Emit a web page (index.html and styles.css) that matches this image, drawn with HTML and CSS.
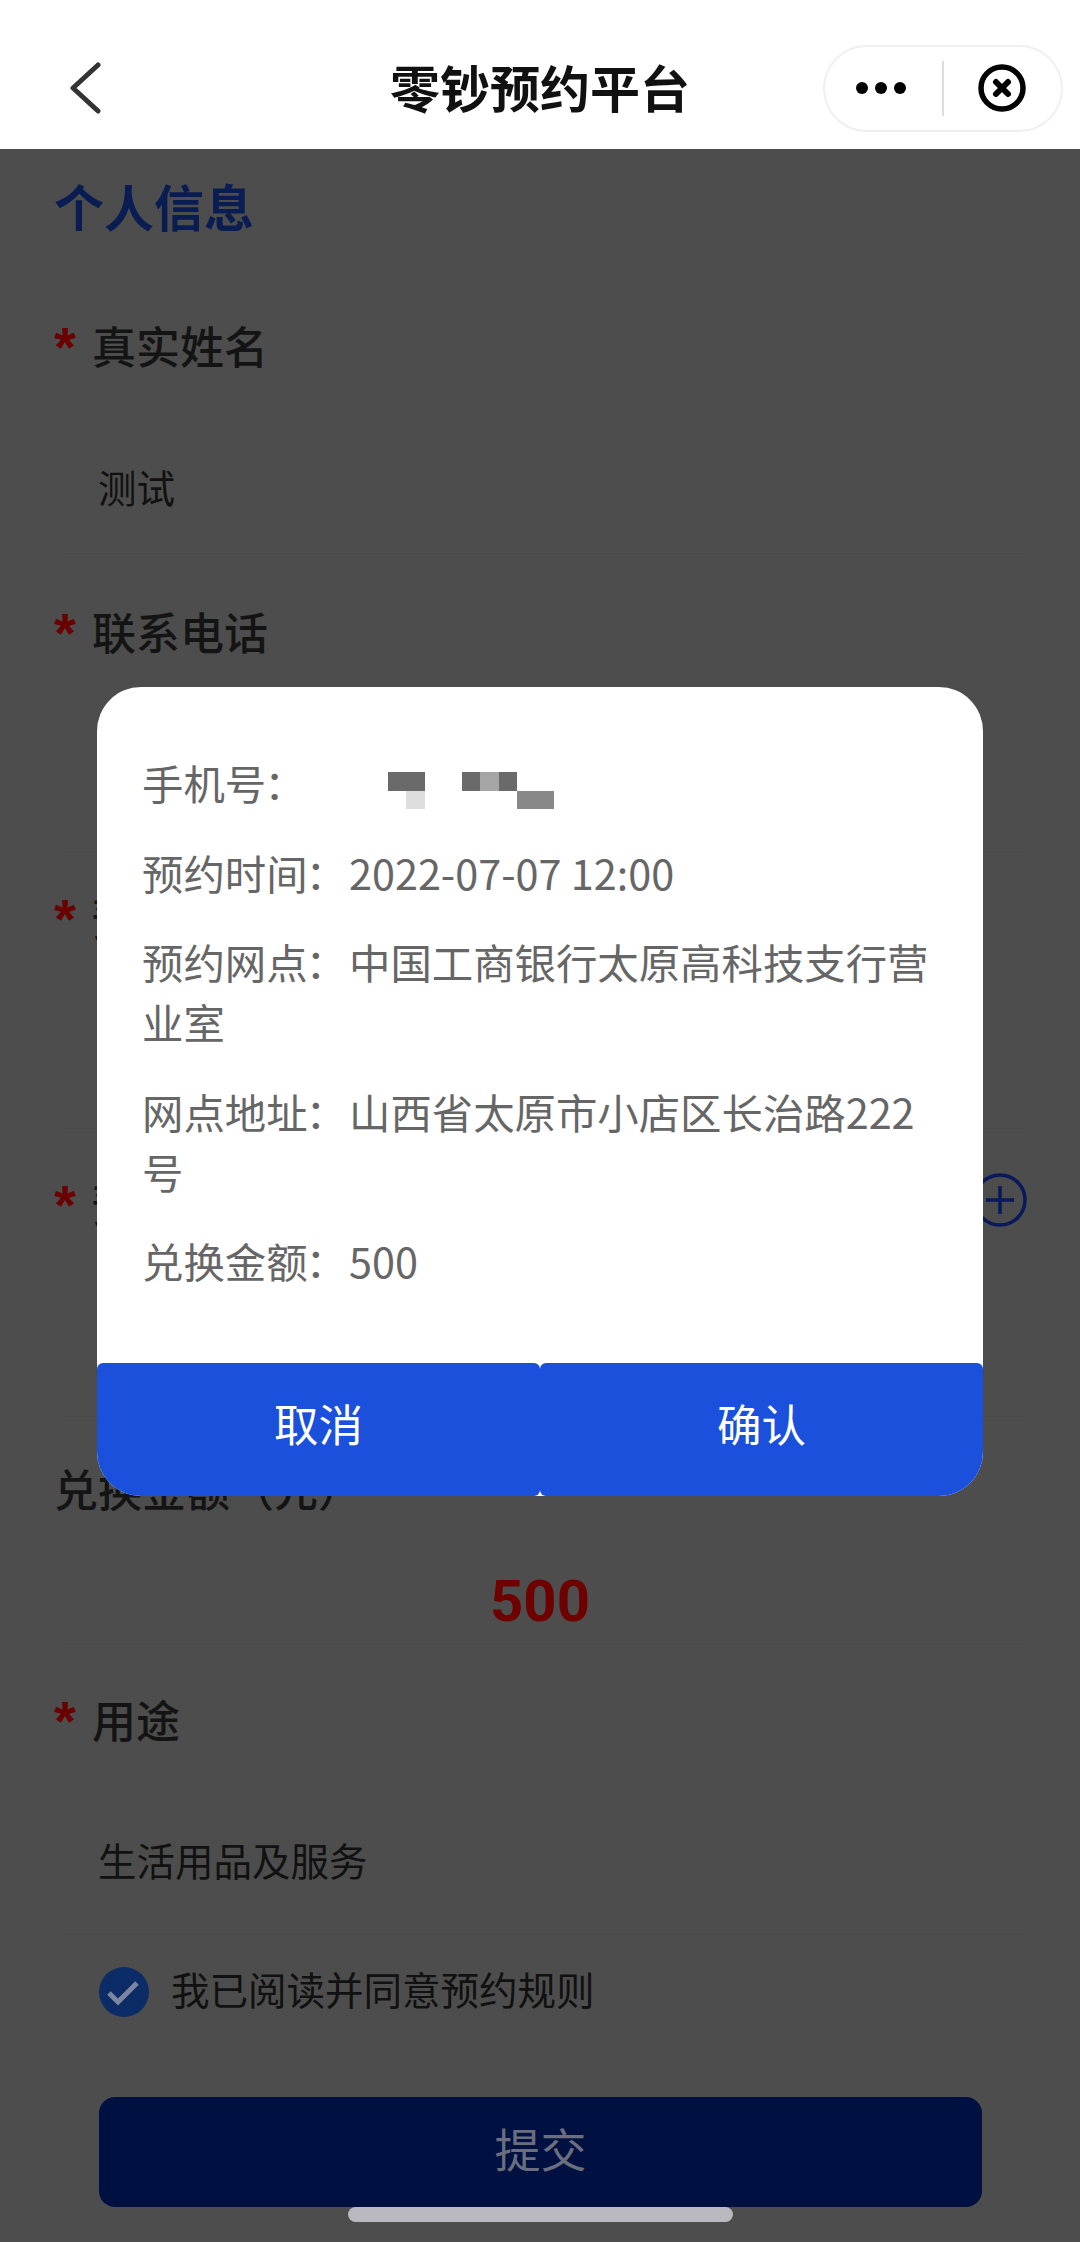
FILE: index.html
```html
<!DOCTYPE html>
<html lang="zh-CN">
<head>
<meta charset="utf-8">
<title>零钞预约平台</title>
<link rel="stylesheet" href="styles.css">
</head>
<body>
<div class="screen">
  <header class="nav">
    <svg class="back" viewBox="0 0 32 52" aria-hidden="true"><path d="M29 3 L4 26 L29 49"/></svg>
    <h1 class="nav-title">零钞预约平台</h1>
    <div class="capsule">
      <svg class="more" viewBox="0 0 52 14" aria-hidden="true"><circle cx="7" cy="7" r="6"/><circle cx="26" cy="7" r="6"/><circle cx="45" cy="7" r="6"/></svg>
      <span class="capsule-rule"></span>
      <svg class="close" viewBox="0 0 48 48" aria-hidden="true"><circle cx="24" cy="24" r="21"/><path d="M18 18 L30 30 M30 18 L18 30"/></svg>
    </div>
  </header>
  <main class="form">
    <h2 class="section-title">个人信息</h2>
    <section class="field f1">
      <div class="label"><span class="star">*</span>真实姓名</div>
      <div class="value">测试</div>
    </section>
    <section class="field f2">
      <div class="label"><span class="star">*</span>联系电话</div>
      <div class="value"></div>
    </section>
    <section class="field f3">
      <div class="label"><span class="star">*</span>预约时间</div>
      <div class="value"></div>
    </section>
    <section class="field f4">
      <div class="label"><span class="star">*</span>预约网点
        <svg class="plus" viewBox="0 0 54 54" aria-hidden="true"><circle cx="27" cy="27" r="25"/><path d="M13 27 H41 M27 13 V41"/></svg>
      </div>
      <div class="value"></div>
    </section>
    <section class="field f5">
      <div class="label">兑换金额（元）</div>
      <div class="amount">500</div>
    </section>
    <section class="field f6">
      <div class="label"><span class="star">*</span>用途</div>
      <div class="value">生活用品及服务</div>
    </section>
    <div class="agree">
      <svg class="tick" viewBox="0 0 50 50" aria-hidden="true"><circle cx="25" cy="25" r="25"/><path d="M10 26 L19 35 L38 16"/></svg>
      <span class="agree-text">我已阅读并同意预约规则</span>
    </div>
    <button class="submit" type="button">提交</button>
  </main>

  <div class="dialog">
    <div class="dialog-body">
      <p class="row">手机号<span class="colon">：</span><span class="mosaic"><i class="t1"></i><i class="t2"></i><i class="t3"></i><i class="t4"></i><i class="t5"></i><i class="t6"></i></span></p>
      <p class="row">预约时间<span class="colon">：</span>2022-07-07 12:00</p>
      <p class="row">预约网点<span class="colon">：</span>中国工商银行太原高科技支行营业室</p>
      <p class="row">网点地址<span class="colon">：</span>山西省太原市小店区长治路222号</p>
      <p class="row">兑换金额<span class="colon">：</span>500</p>
    </div>
    <div class="dialog-actions">
      <button class="dialog-btn" type="button">取消</button>
      <button class="dialog-btn" type="button">确认</button>
    </div>
  </div>
  <div class="home-bar"></div>
</div>
</body>
</html>
```
FILE: styles.css
```css
* { box-sizing: border-box; }
html, body { margin: 0; padding: 0; }
body { font-family: "Noto Sans CJK SC", "Noto Sans", sans-serif; }
.screen { position: relative; width: 1080px; height: 2242px; overflow: hidden; background: #4d4d4d; }

.nav { display: grid; grid-template-columns: 1fr auto 1fr; align-items: center; height: 149px; padding: 27px 17px 0; background: #fff; }
.back { width: 32px; height: 52px; margin-left: 52px; }
.back path { fill: none; stroke: #333; stroke-width: 5; stroke-linecap: round; stroke-linejoin: round; }
.nav-title { margin: -4px 0 0; font-size: 50px; line-height: 60px; font-weight: 700; color: #111; }
.capsule { justify-self: end; display: flex; align-items: center; width: 240px; height: 87px; border: 2px solid #f0f0f0; border-radius: 44px; background: #fff; padding-left: 15px; }
.more { width: 52px; height: 14px; margin-left: 15px; fill: #000; }
.capsule-rule { width: 2px; height: 55px; margin-left: 35px; background: #ddd; }
.close { width: 48px; height: 48px; margin-left: 34px; }
.close circle { fill: none; stroke: #000; stroke-width: 5.5; }
.close path { fill: none; stroke: #000; stroke-width: 6; stroke-linecap: round; }

.form { padding: 26px 54px 0 62px; }
.section-title { margin: 0 0 0 -8px; font-size: 50px; line-height: 60px; font-weight: 700; color: #0a1d52; }
.field { border-bottom: 1px solid #4a4a4a; }
.label { position: relative; display: flex; align-items: center; height: 60px; margin-left: -8px; padding-left: 38px; font-size: 44px; font-weight: 500; color: #141414; }
.star { position: absolute; left: 0; top: 2px; font-family: "Liberation Sans", sans-serif; font-size: 56px; line-height: 60px; font-weight: 700; color: #6a0000; }
.value { margin-left: -8px; padding-left: 44px; font-size: 38.5px; line-height: 60px; color: #111; white-space: nowrap; }
.plus { position: absolute; right: -1px; top: 0; width: 54px; height: 54px; }
.plus circle, .plus path { fill: none; stroke: #08195c; stroke-width: 3.5; }

.f1 { padding-top: 80px; }
.f1 .value { padding-top: 81px; padding-bottom: 37px; }
.f2 { padding-top: 47px; }
.f2 .value { height: 190px; }
.f3 { padding-top: 35px; }
.f3 .value { height: 181px; }
.f4 { padding-top: 44px; }
.f4 .value { height: 183px; }
.f5 { padding-top: 41px; }
.f5 .label { padding-left: 0; }
.amount { margin-left: -8px; padding-top: 53px; padding-bottom: 13px; text-align: center; font-family: Roboto, sans-serif; font-size: 58px; line-height: 60px; font-weight: 700; color: #6e0000; }
.f6 { padding-top: 44px; }
.f6 .value { padding-top: 80px; padding-bottom: 44px; }

.agree { display: flex; align-items: center; gap: 22px; height: 50px; margin: 33px 0 0 37px; font-size: 38.5px; color: #111; }
.agree-text { margin-bottom: 8px; }
.tick { width: 50px; height: 50px; flex: none; }
.tick circle { fill: #0b2c66; }
.tick path { fill: none; stroke: #7d86a0; stroke-width: 5; }
.submit { display: block; width: 883px; height: 110px; margin: 80px 0 0 37px; padding: 0 0 10px; border: 0; border-radius: 16px; background: #001040; color: #6a6e7e; font-family: inherit; font-size: 46px; }

.dialog { position: absolute; left: 97px; top: 687px; display: flex; flex-direction: column; width: 886px; height: 809px; border-radius: 44px; background: #fff; overflow: hidden; }
.dialog-body { flex: 1; padding: 65px 45px 0; }
.row { margin: 0 0 29.5px; font-size: 41.4px; line-height: 60px; color: #666; }
.colon { position: relative; left: -2px; font-family: "Noto Sans CJK TC", sans-serif; }
.mosaic { display: inline-grid; grid-template-columns: repeat(9, 18.5px); grid-template-rows: repeat(2, 18.5px); margin: 20px 0 0 80px; vertical-align: top; }
.mosaic i { display: block; }
.t1 { grid-column: 1 / 3; grid-row: 1; background: #6a6a6a; }
.t2 { grid-column: 2 / 3; grid-row: 2; background: #dedede; }
.t3 { grid-column: 5 / 6; grid-row: 1; background: #6a6a6a; }
.t4 { grid-column: 6 / 7; grid-row: 1; background: #a5a5a5; }
.t5 { grid-column: 7 / 8; grid-row: 1; background: #6a6a6a; }
.t6 { grid-column: 8 / 10; grid-row: 2; background: #888; }
.dialog-actions { display: flex; height: 133px; }
.dialog-btn { flex: 1; border: 0; padding: 0 0 14px; border-radius: 6px; background: #1b50dc; color: #fff; font-family: inherit; font-size: 44.5px; }

.home-bar { position: absolute; left: 348px; top: 2207px; width: 385px; height: 15px; border-radius: 8px; background: #b9b9bf; }
```
